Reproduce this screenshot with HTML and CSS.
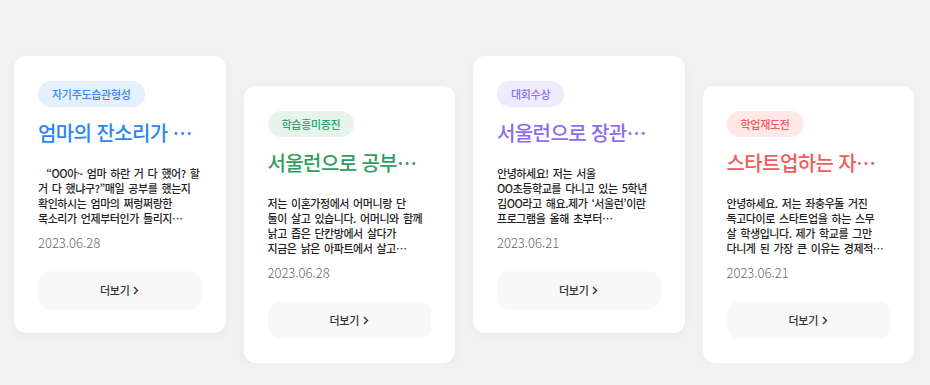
FILE: index.html
```html
<!DOCTYPE html>
<html lang="ko">
<head>
    <meta charset="UTF-8">
    <meta name="viewport" content="width=device-width, initial-scale=1.0">
    <title>서울런 후기</title>
    <link rel="stylesheet" href="styles.css">
</head>
<body>
    <div class="review-list">
        <!-- 카드 1 -->
        <div class="review-card">
            <span class="tag tag-blue">자기주도습관형성</span>
            <h3 class="review-title title-blue">엄마의 잔소리가 사라졌어요</h3>
            <p class="review-text">&nbsp;&nbsp;“OO아~ 엄마 하란 거 다 했어? 할<br>거 다 했냐구?”매일 공부를 했는지<br>확인하시는 엄마의 쩌렁쩌랑한<br>목소리가 언제부터인가 들리지…</p>
            <p class="review-date">2023.06.28</p>
            <button class="more-btn">더보기
                <svg class="chevron" width="6" height="9" viewBox="0 0 6 9"><path d="M1 1l3.5 3.5L1 8" fill="none" stroke="#333" stroke-width="1.4"/></svg>
            </button>
        </div>

        <!-- 카드 2 -->
        <div class="review-card shifted">
            <span class="tag tag-green">학습흥미증진</span>
            <h3 class="review-title title-green">서울런으로 공부하는 즐거움을 알게 됐어요</h3>
            <p class="review-text">저는 이혼가정에서 어머니랑 단<br>둘이 살고 있습니다. 어머니와 함께<br>낡고 좁은 단칸방에서 살다가<br>지금은 낡은 아파트에서 살고…</p>
            <p class="review-date">2023.06.28</p>
            <button class="more-btn">더보기
                <svg class="chevron" width="6" height="9" viewBox="0 0 6 9"><path d="M1 1l3.5 3.5L1 8" fill="none" stroke="#333" stroke-width="1.4"/></svg>
            </button>
        </div>

        <!-- 카드 3 -->
        <div class="review-card">
            <span class="tag tag-purple">대회수상</span>
            <h3 class="review-title title-purple">서울런으로 장관상을 받았어요</h3>
            <p class="review-text">안녕하세요! 저는 서울<br>OO초등학교를 다니고 있는 5학년<br>김OO라고 해요.제가 ‘서울런’이란<br>프로그램을 올해 초부터…</p>
            <p class="review-date">2023.06.21</p>
            <button class="more-btn">더보기
                <svg class="chevron" width="6" height="9" viewBox="0 0 6 9"><path d="M1 1l3.5 3.5L1 8" fill="none" stroke="#333" stroke-width="1.4"/></svg>
            </button>
        </div>

        <!-- 카드 4 -->
        <div class="review-card shifted">
            <span class="tag tag-red">학업재도전</span>
            <h3 class="review-title title-red">스타트업하는 자퇴생의 검정고시 도전기</h3>
            <p class="review-text">안녕하세요. 저는 좌충우돌 거진<br>독고다이로 스타트업을 하는 스무<br>살 학생입니다. 제가 학교를 그만<br>다니게 된 가장 큰 이유는 경제적…</p>
            <p class="review-date">2023.06.21</p>
            <button class="more-btn">더보기
                <svg class="chevron" width="6" height="9" viewBox="0 0 6 9"><path d="M1 1l3.5 3.5L1 8" fill="none" stroke="#333" stroke-width="1.4"/></svg>
            </button>
        </div>
    </div>
</body>
</html>
```

FILE: styles.css
```css
body {
    margin: 0;
    background-color: #f1f1f1;
    font-family: "Noto Sans CJK KR", "Noto Sans", sans-serif;
    color: #222;
}
.review-list {
    display: flex;
    align-items: flex-start;
    gap: 18px;
    padding: 56px 16px 0 14px;
}
.review-card {
    width: 211.5px;
    flex-shrink: 0;
    box-sizing: border-box;
    background-color: #fff;
    border-radius: 12px;
    padding: 24px 24px 24px;
    box-shadow: 0 3px 10px rgba(0, 0, 0, 0.035);
}
.review-card.shifted {
    margin-top: 30px;
}
.tag {
    display: inline-block;
    height: 26px;
    line-height: 26px;
    padding: 0 14px;
    border-radius: 13px;
    font-size: 11px;
    font-weight: 500;
    letter-spacing: -0.3px;
}
.tag-blue { background-color: #e4efff; color: #3a86ee; }
.tag-green { background-color: #e6f4ec; color: #35a066; }
.tag-purple { background-color: #efebff; color: #8a6ff0; }
.tag-red { background-color: #ffe8e8; color: #f25c5c; }
.review-title {
    margin: 13px 0 0;
    font-size: 20px;
    font-weight: 500;
    line-height: 26px;
    letter-spacing: -0.6px;
    white-space: nowrap;
    overflow: hidden;
    text-overflow: ellipsis;
}
.title-blue { color: #2c86ee; }
.title-green { color: #2f9e5f; }
.title-purple { color: #8b6ef0; }
.title-red { color: #f25a5a; }
.review-text {
    margin: 20px 0 0;
    font-size: 11px;
    line-height: 15px;
    font-weight: 500;
    letter-spacing: -0.45px;
    word-spacing: 1.5px;
    color: #1f1f1f;
    word-break: keep-all;
    display: -webkit-box;
    -webkit-line-clamp: 4;
    -webkit-box-orient: vertical;
    overflow: hidden;
}
.review-date {
    margin: 8px 0 0;
    font-size: 13px;
    line-height: 18px;
    font-weight: 300;
    color: #666;
}
.more-btn {
    display: flex;
    align-items: center;
    justify-content: center;
    gap: 4px;
    width: 100%;
    height: 38px;
    margin-top: 19px;
    border: none;
    border-radius: 12px;
    background-color: #f8f8f8;
    font-family: inherit;
    font-size: 11px;
    font-weight: 500;
    letter-spacing: -0.3px;
    color: #333;
    cursor: pointer;
}
```
